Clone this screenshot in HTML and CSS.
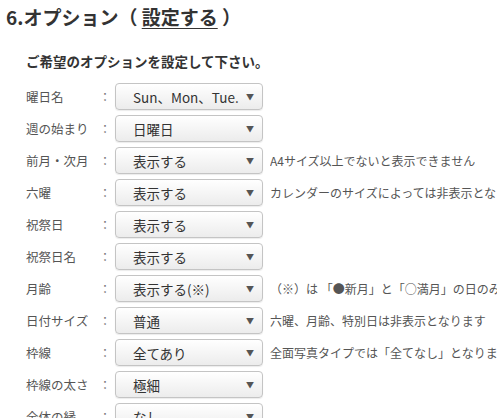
FILE: index.html
```html
<!DOCTYPE html>
<html lang="ja">
<head>
<meta charset="utf-8">
<link rel="stylesheet" href="styles.css">
</head>
<body>
<h2 class="title">6.オプション（ <a class="title-link" href="#">設定する</a> ）</h2>
<p class="lead">ご希望のオプションを設定して下さい。</p>
<ul class="options">
  <li class="row"><span class="label">曜日名</span><span class="colon">：</span><div class="select"><span class="value">Sun、Mon、Tue.</span><span class="arrow">▼</span></div></li>
  <li class="row"><span class="label">週の始まり</span><span class="colon">：</span><div class="select"><span class="value">日曜日</span><span class="arrow">▼</span></div></li>
  <li class="row"><span class="label">前月・次月</span><span class="colon">：</span><div class="select"><span class="value">表示する</span><span class="arrow">▼</span></div><span class="note">A4サイズ以上でないと表示できません</span></li>
  <li class="row"><span class="label">六曜</span><span class="colon">：</span><div class="select"><span class="value">表示する</span><span class="arrow">▼</span></div><span class="note">カレンダーのサイズによっては非表示となります</span></li>
  <li class="row"><span class="label">祝祭日</span><span class="colon">：</span><div class="select"><span class="value">表示する</span><span class="arrow">▼</span></div></li>
  <li class="row"><span class="label">祝祭日名</span><span class="colon">：</span><div class="select"><span class="value">表示する</span><span class="arrow">▼</span></div></li>
  <li class="row"><span class="label">月齢</span><span class="colon">：</span><div class="select"><span class="value">表示する(※)</span><span class="arrow">▼</span></div><span class="note">（※）は 「●新月」と「○満月」の日のみ表示</span></li>
  <li class="row"><span class="label">日付サイズ</span><span class="colon">：</span><div class="select"><span class="value">普通</span><span class="arrow">▼</span></div><span class="note">六曜、月齢、特別日は非表示となります</span></li>
  <li class="row"><span class="label">枠線</span><span class="colon">：</span><div class="select"><span class="value">全てあり</span><span class="arrow">▼</span></div><span class="note">全面写真タイプでは「全てなし」となります</span></li>
  <li class="row"><span class="label">枠線の太さ</span><span class="colon">：</span><div class="select"><span class="value">極細</span><span class="arrow">▼</span></div></li>
  <li class="row"><span class="label">全体の縁</span><span class="colon">：</span><div class="select"><span class="value">なし</span><span class="arrow">▼</span></div></li>
</ul>
</body>
</html>
```

FILE: styles.css
```css
html, body {
  margin: 0;
  padding: 0;
  background: #fff;
  overflow: hidden;
}
body {
  font-family: "Noto Sans CJK JP", "Noto Sans", sans-serif;
  color: #333;
  width: 497px;
  height: 418px;
}
.title {
  margin: 0;
  padding: 4px 0 0 6px;
  font-size: 19px;
  line-height: 26px;
  font-weight: bold;
  color: #333;
  white-space: nowrap;
}
.title-link {
  color: #333;
  text-decoration: underline;
  text-underline-offset: 3px;
}
.lead {
  margin: 0;
  padding: 21px 0 0 26px;
  font-size: 13.5px;
  line-height: 20px;
  font-weight: bold;
  color: #333;
}
.options {
  list-style: none;
  margin: 0;
  padding: 12px 0 0 26px;
  display: flex;
  flex-direction: column;
  gap: 5px;
  overflow: hidden;
}
.row {
  display: flex;
  align-items: center;
  height: 27px;
  white-space: nowrap;
  min-width: 0;
}
.label {
  width: 73px;
  flex-shrink: 0;
  font-size: 12.5px;
  color: #555;
}
.colon {
  width: 16px;
  flex-shrink: 0;
  font-size: 12px;
  color: #777;
}
.select {
  box-sizing: border-box;
  width: 148px;
  height: 27px;
  border: 1px solid #c4c4c4;
  border-radius: 4px;
  background: linear-gradient(#ffffff, #ececec);
  box-shadow: 0 1px 1px rgba(0,0,0,0.08);
  display: flex;
  align-items: center;
  padding: 0 8px 0 17px;
  flex-shrink: 0;
}
.value {
  flex: 1;
  font-size: 13.5px;
  color: #333;
  overflow: hidden;
}
.arrow {
  font-size: 8px;
  color: #555;
}
.note {
  margin-left: 7px;
  min-width: 0;
  overflow: hidden;
  font-size: 12px;
  color: #555;
}
```
